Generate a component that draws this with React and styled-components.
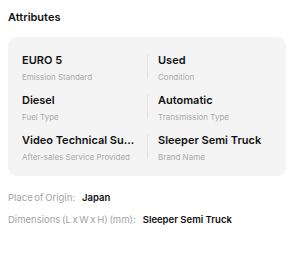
import React from 'react';
import styled, { createGlobalStyle } from 'styled-components';

const GlobalStyle = createGlobalStyle`
  body {
    margin: 0;
    background: #fff;
    font-family: Inter, "Noto Sans", sans-serif;
    color: #111;
  }
`;

const Wrapper = styled.div`
  padding: 10px 14px 0 8px;
`;

const Title = styled.h2`
  margin: 0 0 13px;
  font-size: 11px;
  line-height: 14px;
  font-weight: 600;
`;

const Card = styled.div`
  background: #f4f4f4;
  border-radius: 9px;
  padding: 16px 14px 13px;
  display: grid;
  grid-template-columns: 1fr 1fr;
  row-gap: 10px;
`;

const Cell = styled.div`
  position: relative;
  min-width: 0;
  padding-left: ${(p) => (p.$right ? '11px' : '0')};
  padding-right: ${(p) => (p.$right ? '0' : '11px')};

  &::before {
    content: '';
    display: ${(p) => (p.$right ? 'block' : 'none')};
    position: absolute;
    left: 0;
    top: 1px;
    width: 1px;
    height: 25px;
    background: #e3e3e3;
  }
`;

const Value = styled.div`
  font-size: 11px;
  line-height: 14px;
  font-weight: 600;
  white-space: nowrap;
  overflow: hidden;
  text-overflow: ellipsis;
`;

const Label = styled.div`
  margin-top: 5px;
  font-size: 8px;
  line-height: 11px;
  color: #a9a9a9;
  white-space: nowrap;
  overflow: hidden;
  text-overflow: ellipsis;
`;

const Details = styled.div`
  margin-top: 16px;
  display: flex;
  flex-direction: column;
  gap: 10px;
`;

const DetailRow = styled.div`
  font-size: 9.5px;
  line-height: 12px;
  word-spacing: -1px;
  color: #a3a3a3;
`;

const DetailValue = styled.span`
  margin-left: 7px;
  word-spacing: 0;
  color: #111;
  font-weight: 600;
`;

const attrs = [
  ['EURO 5', 'Emission Standard'],
  ['Used', 'Condition'],
  ['Diesel', 'Fuel Type'],
  ['Automatic', 'Transmission Type'],
  ['Video Technical Support', 'After-sales Service Provided'],
  ['Sleeper Semi Truck', 'Brand Name'],
];

const App = () => (
  <Wrapper>
    <GlobalStyle />
    <Title>Attributes</Title>
    <Card>
      {attrs.map(([value, label], i) => (
        <Cell key={label} $right={i % 2 === 1}>
          <Value>{value}</Value>
          <Label>{label}</Label>
        </Cell>
      ))}
    </Card>
    <Details>
      <DetailRow>
        Place of Origin:<DetailValue>Japan</DetailValue>
      </DetailRow>
      <DetailRow>
        Dimensions (L x W x H) (mm):<DetailValue>Sleeper Semi Truck</DetailValue>
      </DetailRow>
    </Details>
  </Wrapper>
);

export default App;
